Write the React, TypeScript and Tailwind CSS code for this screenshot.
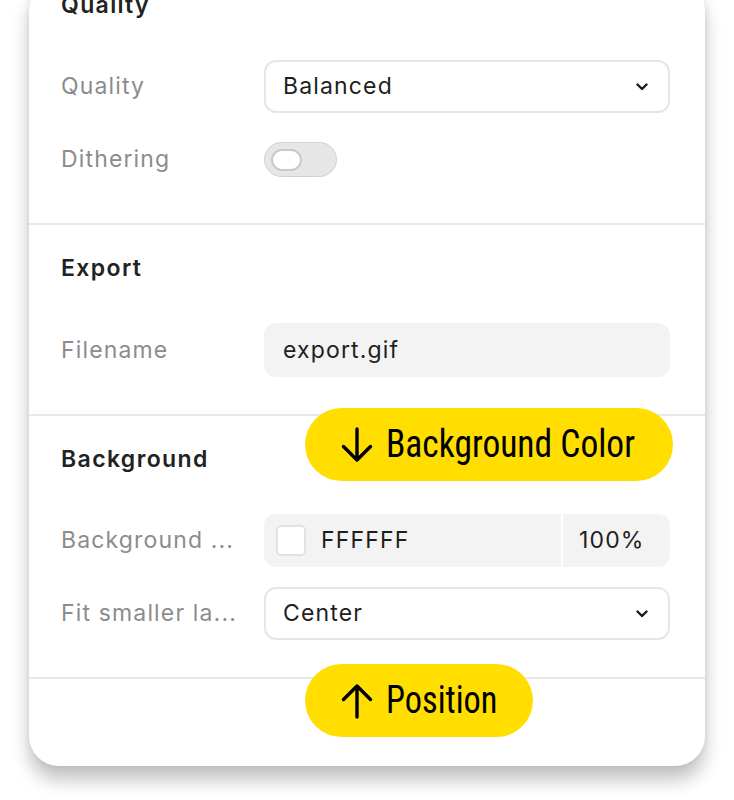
import React, { useState } from 'react';

const font = { fontFamily: 'Inter, "Noto Sans", sans-serif' };
const pillFont = { fontFamily: '"Liberation Sans Narrow", "Roboto Condensed", Roboto, sans-serif' };

const Chevron: React.FC = () => (
  <svg width="12" height="8" viewBox="0 0 12 8" fill="none">
    <path d="M1.5 1.5 6 6l4.5-4.5" stroke="#1a1a1a" strokeWidth="2.4" strokeLinecap="round" strokeLinejoin="round" />
  </svg>
);

const Arrow: React.FC<{ up?: boolean }> = ({ up }) => (
  <svg width="34" height="36" viewBox="0 0 34 36" fill="none" className={up ? '' : 'rotate-180'}>
    <path d="M17 3v31M3.5 16.5 17 3l13.5 13.5" stroke="#000" strokeWidth="3.4" strokeLinecap="round" strokeLinejoin="round" />
  </svg>
);

const Row: React.FC<{ label: string; children: React.ReactNode; h?: string }> = ({ label, children, h = 'h-[53px]' }) => (
  <div className={`flex items-center ${h}`}>
    <div className="w-[203px] text-[23px] text-[#8c8c8c] tracking-[0.05em] whitespace-nowrap">{label}</div>
    <div className="w-[406px] h-full flex items-center">{children}</div>
  </div>
);

const Select: React.FC<{ value: string }> = ({ value }) => (
  <div className="w-full h-full flex items-center justify-between rounded-[12px] border-2 border-[#e6e6e6] bg-white pl-[17px] pr-[20px]">
    <span className="text-[23px] text-[#1e1e1e] tracking-[0.05em]">{value}</span>
    <Chevron />
  </div>
);

const Heading: React.FC<{ title: string }> = ({ title }) => (
  <div className="h-[30px] flex items-center text-[23px] font-semibold text-[#222] tracking-[0.06em] mb-[40px]">{title}</div>
);

const App: React.FC = () => {
  const [dither, setDither] = useState(false);

  return (
    <div className="w-[734px] h-[800px] overflow-hidden bg-white" style={font}>
      <div className="relative mx-[29px] -mt-[20px] rounded-[30px] bg-white shadow-[0_14px_18px_rgba(0,0,0,0.24),0_0_6px_rgba(0,0,0,0.08)]">
        {/* Quality */}
        <div className="pl-[32px] pt-[10px] pb-[37px]">
          <Heading title="Quality" />
          <div className="flex flex-col gap-[20px]">
            <Row label="Quality">
              <Select value="Balanced" />
            </Row>
            <Row label="Dithering">
              <button
                onClick={() => setDither(!dither)}
                className="w-[73px] h-[35px] rounded-full bg-[#e6e6e6] border border-[#d2d2d2] flex items-center px-[6px]"
              >
                <span className="w-[31px] h-[22px] rounded-full bg-white border-2 border-[#c9c9c9]" />
              </button>
            </Row>
          </div>
        </div>

        {/* Export */}
        <div className="border-t-2 border-[#e8e8e8] pl-[32px] pt-[28px] pb-[37px]">
          <Heading title="Export" />
          <Row label="Filename" h="h-[54px]">
            <div className="w-full h-full flex items-center rounded-[12px] bg-[#f3f3f3] pl-[19px] text-[23px] text-[#1e1e1e] tracking-[0.05em]">
              export.gif
            </div>
          </Row>
        </div>

        {/* Background */}
        <div className="border-t-2 border-[#e8e8e8] pl-[32px] pt-[28px] pb-[37px]">
          <Heading title="Background" />
          <div className="flex flex-col gap-[20px]">
            <Row label="Background ...">
              <div className="w-full h-full flex rounded-[12px] bg-[#f3f3f3] overflow-hidden">
                <div className="flex-1 flex items-center pl-[12px] gap-[15px]">
                  <span className="w-[30px] h-[31px] rounded-[5px] bg-white border-2 border-[#e2e2e2]" />
                  <span className="text-[23px] text-[#1e1e1e] tracking-[0.05em]">FFFFFF</span>
                </div>
                <div className="w-[2px] bg-white" />
                <div className="w-[107px] flex items-center pl-[16px] text-[23px] text-[#1e1e1e] tracking-[0.05em]">100%</div>
              </div>
            </Row>
            <Row label="Fit smaller la...">
              <Select value="Center" />
            </Row>
          </div>
        </div>

        {/* Position */}
        <div className="border-t-2 border-[#e8e8e8] h-[89px]" />

        {/* annotations */}
        <div className="absolute left-[276px] top-[428px] w-[368px] h-[73px] rounded-full bg-[#ffde00] flex items-center pl-[35px] gap-[12px]">
          <Arrow />
          <span className="inline-block text-[39px] text-black leading-none origin-left scale-x-[0.91] whitespace-nowrap" style={pillFont}>
            Background Color
          </span>
        </div>
        <div className="absolute left-[276px] top-[684px] w-[228px] h-[73px] rounded-full bg-[#ffde00] flex items-center pl-[35px] gap-[12px]">
          <Arrow up />
          <span className="inline-block text-[39px] text-black leading-none origin-left scale-x-[0.88] whitespace-nowrap" style={pillFont}>
            Position
          </span>
        </div>
      </div>
    </div>
  );
};

export default App;
